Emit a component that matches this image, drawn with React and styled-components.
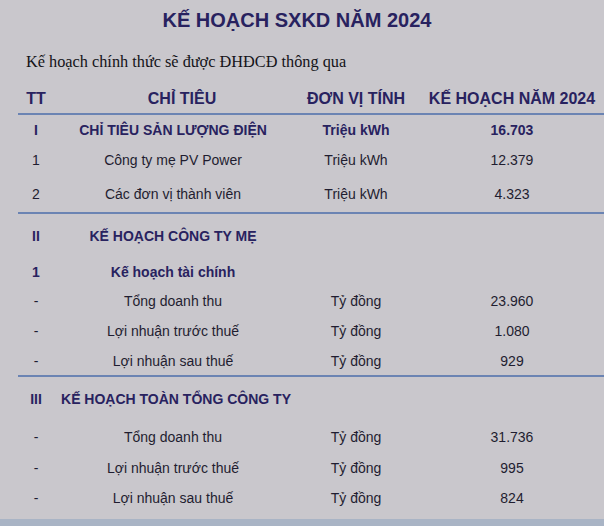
import React from "react";
import styled, { createGlobalStyle } from "styled-components";

const GlobalStyle = createGlobalStyle`
  html, body {
    margin: 0;
    padding: 0;
    background: #c9c7cc;
  }
`;

const Page = styled.div`
  width: 604px;
  height: 526px;
  display: flex;
  flex-direction: column;
  background: #c9c7cc;
  font-family: "Liberation Sans", Arial, sans-serif;
  overflow: hidden;
`;

const Title = styled.h1`
  margin: 0;
  height: 40px;
  padding-right: 10px;
  display: flex;
  align-items: center;
  justify-content: center;
  font-size: 20px;
  font-weight: 700;
  color: #28225f;
`;

const Subtitle = styled.p`
  margin: 0;
  height: 44px;
  display: flex;
  align-items: center;
  padding-left: 26px;
  font-family: "Liberation Serif", "Times New Roman", serif;
  font-size: 16.3px;
  color: #141318;
`;

const Table = styled.div`
  display: flex;
  flex-direction: column;
`;

const Section = styled.div`
  margin-left: 18px;
  border-bottom: ${(p) => (p.$line ? "2px solid #6b84b3" : "none")};
`;

const Row = styled.div`
  display: grid;
  grid-template-columns: 36px 238px 128px 184px;
  height: ${(p) => p.$h}px;
  align-items: center;
  font-size: ${(p) => (p.$head ? 16 : 14)}px;
  font-weight: ${(p) => (p.$bold || p.$head ? 700 : 400)};
  color: ${(p) => (p.$bold || p.$head ? "#28225f" : "#1f1d30")};
`;

const Cell = styled.div`
  text-align: center;
  white-space: nowrap;
  padding-left: ${(p) => p.$shift || 0}px;
`;

const Footer = styled.div`
  margin-top: auto;
  height: 7px;
  background: #a9b4c5;
`;

const sections = [
  [
    { h: 30, bold: true, tt: "I", name: "CHỈ TIÊU SẢN LƯỢNG ĐIỆN", unit: "Triệu kWh", val: "16.703" },
    { h: 30, tt: "1", name: "Công ty mẹ PV Power", unit: "Triệu kWh", val: "12.379" },
    { h: 37, tt: "2", name: "Các đơn vị thành viên", unit: "Triệu kWh", val: "4.323" },
  ],
  [
    { h: 44, bold: true, tt: "II", name: "KẾ HOẠCH CÔNG TY MẸ" },
    { h: 28, bold: true, tt: "1", name: "Kế hoạch tài chính" },
    { h: 30, tt: "-", name: "Tổng doanh thu", unit: "Tỷ đồng", val: "23.960" },
    { h: 30, tt: "-", name: "Lợi nhuận trước thuế", unit: "Tỷ đồng", val: "1.080" },
    { h: 29, tt: "-", name: "Lợi nhuận sau thuế", unit: "Tỷ đồng", val: "929" },
  ],
  [
    { h: 44, bold: true, tt: "III", name: "KẾ HOẠCH TOÀN TỔNG CÔNG TY", shift: 6 },
    { h: 32, tt: "-", name: "Tổng doanh thu", unit: "Tỷ đồng", val: "31.736" },
    { h: 30, tt: "-", name: "Lợi nhuận trước thuế", unit: "Tỷ đồng", val: "995" },
    { h: 30, tt: "-", name: "Lợi nhuận sau thuế", unit: "Tỷ đồng", val: "824" },
  ],
];

export default function App() {
  return (
    <Page>
      <GlobalStyle />
      <Title>KẾ HOẠCH SXKD NĂM 2024</Title>
      <Subtitle>Kế hoạch chính thức sẽ được ĐHĐCĐ thông qua</Subtitle>
      <Table>
        <Section $line>
          <Row $head $h={29}>
            <Cell>TT</Cell>
            <Cell $shift={18}>CHỈ TIÊU</Cell>
            <Cell>ĐƠN VỊ TÍNH</Cell>
            <Cell>KẾ HOẠCH NĂM 2024</Cell>
          </Row>
        </Section>
        {sections.map((rows, i) => (
          <Section key={i} $line={i < sections.length - 1}>
            {rows.map((r, j) => (
              <Row key={j} $h={r.h} $bold={r.bold}>
                <Cell>{r.tt}</Cell>
                <Cell $shift={r.shift}>{r.name}</Cell>
                <Cell>{r.unit}</Cell>
                <Cell>{r.val}</Cell>
              </Row>
            ))}
          </Section>
        ))}
      </Table>
      <Footer />
    </Page>
  );
}
